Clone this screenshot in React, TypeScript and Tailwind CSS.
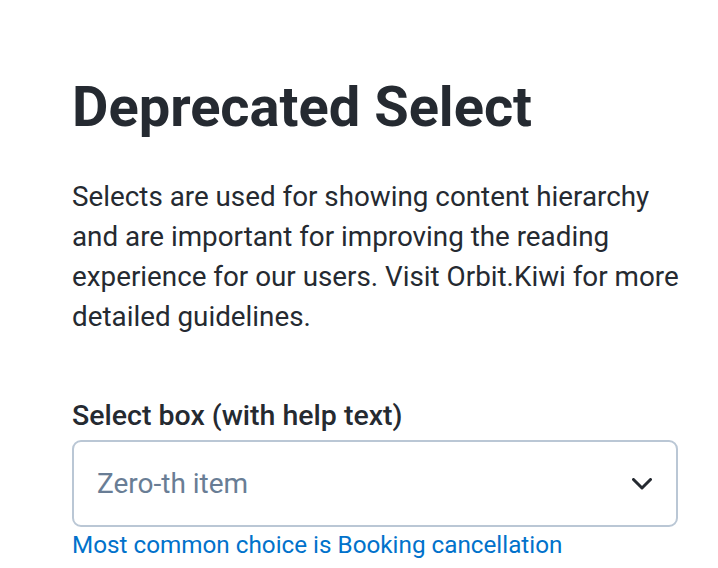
const App = () => {
  return (
    <div className="min-h-screen bg-white font-['Roboto',sans-serif] text-[#252a31]">
      <div className="ml-[72px] w-[606px] pt-[79px]">
        <h1 className="text-[56px] leading-[56px] font-bold">Deprecated Select</h1>

        <p className="mt-[42px] w-[614px] text-[27.8px] leading-[40px] font-normal">
          Selects are used for showing content hierarchy and are important for improving the reading
          experience for our users. Visit Orbit.Kiwi for more detailed guidelines.
        </p>

        <div className="mt-[61px] flex flex-col">
          <label className="text-[28.5px] leading-[36px] font-medium">Select box (with help text)</label>
          <div className="relative mt-[6px] h-[87px] w-full rounded-[9px] border-2 border-[#bac7d5] bg-white">
            <div className="flex h-full items-center pl-[23px] text-[28px] text-[#697d95]">Zero-th item</div>
            <svg
              className="absolute right-[24px] top-1/2 -translate-y-1/2"
              width="20"
              height="12"
              viewBox="0 0 20 12"
              fill="none"
            >
              <path d="M1.5 1.5 L10 10 L18.5 1.5" stroke="#252a31" strokeWidth="3" strokeLinecap="round" strokeLinejoin="round" />
            </svg>
          </div>
          <p className="mt-[3px] text-[24.25px] leading-[30px] text-[#0172cb]">Most common choice is Booking cancellation</p>
        </div>
      </div>
    </div>
  );
};

export default App;
